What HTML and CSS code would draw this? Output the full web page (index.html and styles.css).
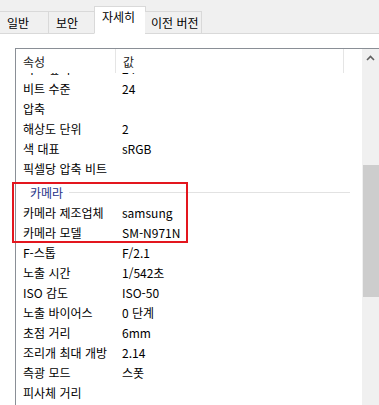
FILE: index.html
```html
<!DOCTYPE html>
<html lang="ko">
<head>
    <meta charset="UTF-8">
    <meta name="viewport" content="width=device-width, initial-scale=1.0">
    <title>속성</title>
    <link rel="stylesheet" href="styles.css">
</head>
<body>
    <div class="tabs">
        <div class="tab first">일반</div>
        <div class="tab">보안</div>
        <div class="tab active">자세히</div>
        <div class="tab">이전 버전</div>
    </div>
    <main class="page">
        <div class="list">
            <div class="list-main">
                <div class="head">
                    <div class="hcell name">속성</div>
                    <div class="hcell value">값</div>
                </div>
                <div class="body">
                    <div class="row cut"><span class="k">비트 깊이</span><span class="v">24</span></div>
                    <div class="row"><span class="k">비트 수준</span><span class="v">24</span></div>
                    <div class="row"><span class="k">압축</span><span class="v"></span></div>
                    <div class="row"><span class="k">해상도 단위</span><span class="v">2</span></div>
                    <div class="row"><span class="k">색 대표</span><span class="v">sRGB</span></div>
                    <div class="row"><span class="k">픽셀당 압축 비트</span><span class="v"></span></div>
                    <div class="group"><span>카메라</span><i></i></div>
                    <div class="row"><span class="k">카메라 제조업체</span><span class="v">samsung</span></div>
                    <div class="row"><span class="k">카메라 모델</span><span class="v">SM-N971N</span></div>
                    <div class="row"><span class="k">F-스톱</span><span class="v">F/2.1</span></div>
                    <div class="row"><span class="k">노출 시간</span><span class="v">1/542초</span></div>
                    <div class="row"><span class="k">ISO 감도</span><span class="v">ISO-50</span></div>
                    <div class="row"><span class="k">노출 바이어스</span><span class="v">0 단계</span></div>
                    <div class="row"><span class="k">초점 거리</span><span class="v">6mm</span></div>
                    <div class="row"><span class="k">조리개 최대 개방</span><span class="v">2.14</span></div>
                    <div class="row"><span class="k">측광 모드</span><span class="v">스폿</span></div>
                    <div class="row"><span class="k">피사체 거리</span><span class="v"></span></div>
                </div>
            </div>
            <div class="scrollbar">
                <div class="arrow">
                    <svg width="9" height="6" viewBox="0 0 9 6"><path d="M1 5 L4.5 1.5 L8 5" fill="none" stroke="#606060" stroke-width="1.6"/></svg>
                </div>
                <div class="thumb"></div>
            </div>
        </div>
        <div class="mark"></div>
    </main>
</body>
</html>
```

FILE: styles.css
```css
*{
    margin: 0;
    padding: 0;
    box-sizing: border-box;
}
body{
    width: 379px;
    height: 405px;
    overflow: hidden;
    background-color: #fff;
    font-family: "Noto Sans CJK KR", "Noto Sans", sans-serif;
    font-size: 12px;
    color: #000;
}
.tabs{
    display: flex;
    align-items: flex-end;
    height: 34px;
    background-color: #f0f0f0;
    border-bottom: 1px solid #d9d9d9;
}
.tab{
    height: 23px;
    margin-bottom: -1px;
    padding: 0 8px;
    line-height: 21px;
    white-space: nowrap;
    border: 1px solid #d9d9d9;
    border-left: none;
    background-color: #f0f0f0;
    color: #000;
}
.tab.first{
    width: 49px;
    padding-left: 7px;
}
.tab:nth-child(2){
    width: 46px;
    padding-left: 7px;
}
.tab.active{
    height: 28px;
    width: 52px;
    margin-left: -1px;
    padding-left: 7px;
    line-height: 20px;
    background-color: #fff;
    border-left: 1px solid #d9d9d9;
    border-bottom-color: #fff;
}
.tab:last-child{
    width: 57px;
    margin-left: -1px;
    padding: 0 0 0 6px;
}
.page{
    position: relative;
    padding: 14px 0 0 15px;
}
.list{
    display: flex;
    height: 357px;
    border-top: 1px solid #8a8f96;
    border-left: 1px solid #8a8f96;
}
.list-main{
    width: 346px;
    overflow: hidden;
}
.head{
    display: flex;
    height: 24px;
    line-height: 26px;
    color: #222;
}
.hcell{
    padding-left: 7px;
    border-right: 1px solid #e5e5e5;
    height: 24px;
}
.hcell.name{
    width: 100px;
}
.hcell.value{
    width: 228px;
}
.body{
    height: 332px;
    overflow: hidden;
}
.row{
    display: flex;
    height: 20px;
    line-height: 20px;
}
.row.cut{
    margin-top: -14px;
}
.k{
    width: 106px;
    padding-left: 7px;
    white-space: nowrap;
    overflow: hidden;
}
.v{
    white-space: nowrap;
}
.group{
    display: flex;
    align-items: center;
    height: 24px;
    padding: 2px 12px 0 14px;
    color: #1e3287;
}
.group i{
    flex: 1;
    height: 1px;
    margin-left: 6px;
    background-color: #e2e2e2;
}
.scrollbar{
    width: 17px;
    background-color: #f0f0f0;
    position: relative;
}
.arrow{
    height: 17px;
    display: flex;
    align-items: center;
    justify-content: center;
}
.thumb{
    position: absolute;
    left: 1px;
    right: 0;
    top: 116px;
    height: 132px;
    background-color: #cdcdcd;
}
.mark{
    position: absolute;
    left: 12px;
    top: 148px;
    width: 176px;
    height: 61px;
    border: 2px solid #e3161e;
}
```
